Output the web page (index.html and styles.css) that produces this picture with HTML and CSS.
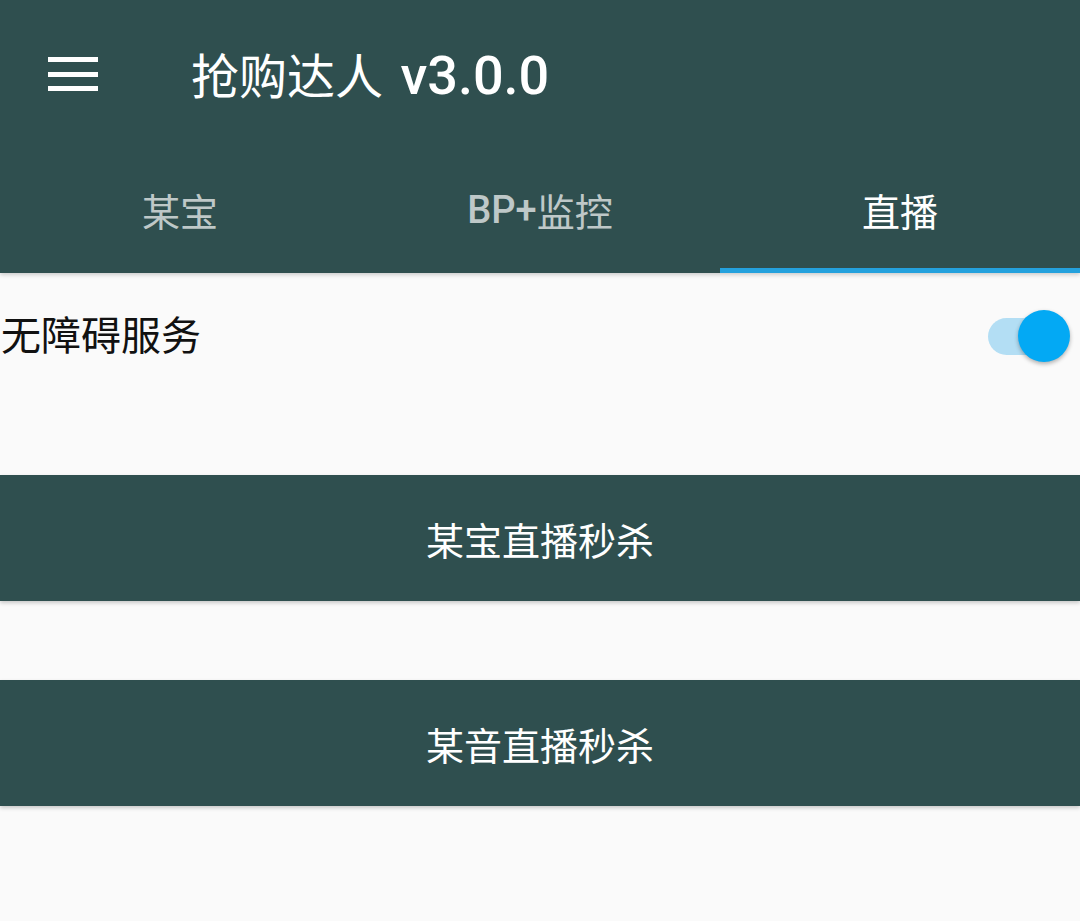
FILE: index.html
```html
<!DOCTYPE html>
<html lang="zh-CN">
<head>
<meta charset="utf-8">
<title>抢购达人 v3.0.0</title>
<link rel="stylesheet" href="styles.css">
</head>
<body>
<div class="app">
  <header class="appbar">
    <div class="toolbar">
      <button class="menu" aria-label="menu">
        <span class="bar"></span><span class="bar"></span><span class="bar"></span>
      </button>
      <h1 class="title">抢购达人<span class="latin"> v3.0.0</span></h1>
    </div>
    <nav class="tabs">
      <div class="tab">某宝</div>
      <div class="tab"><span class="latin">BP+</span>监控</div>
      <div class="tab active">直播</div>
    </nav>
  </header>
  <main class="content">
    <div class="row">
      <span class="row-label">无障碍服务</span>
      <div class="switch">
        <span class="track"></span>
        <span class="thumb"></span>
      </div>
    </div>
    <button class="action first">某宝直播秒杀</button>
    <button class="action second">某音直播秒杀</button>
  </main>
</div>
</body>
</html>
```

FILE: styles.css
```css
* { box-sizing: border-box; }
html, body {
  margin: 0;
  padding: 0;
  background: #fafafa;
  font-family: Roboto, "Noto Sans CJK SC", sans-serif;
}
.app {
  width: 1080px;
  min-height: 921px;
  background: #fafafa;
  overflow: hidden;
}
.appbar {
  background: #2f4f4f;
  position: relative;
  z-index: 2;
  box-shadow: 0 2px 4px rgba(0,0,0,0.18);
}
.toolbar {
  height: 147px;
  display: flex;
  align-items: center;
  padding-left: 48px;
}
.menu {
  width: 50px;
  height: 34px;
  padding: 0;
  border: 0;
  background: transparent;
  display: flex;
  flex-direction: column;
  justify-content: space-between;
  margin-top: 1px;
}
.bar {
  display: block;
  width: 50px;
  height: 5px;
  background: #ffffff;
}
.title {
  margin: 0 0 0 93px;
  color: #ffffff;
  font-size: 48px;
  font-weight: 400;
  line-height: 1;
  padding-top: 4px;
}
.title .latin {
  font-size: 54px;
  font-weight: 500;
  margin-left: 4px;
}
.tabs {
  display: flex;
  height: 126px;
}
.tab {
  flex: 1;
  display: flex;
  align-items: center;
  justify-content: center;
  font-size: 38px;
  font-weight: 400;
  color: rgba(255,255,255,0.7);
  padding-top: 4px;
  border-bottom: 5px solid transparent;
}
.tab .latin {
  font-weight: 500;
}
.tab.active {
  color: #ffffff;
  border-bottom-color: #24a1dd;
}
.content {
  display: flex;
  flex-direction: column;
}
.row {
  height: 126px;
  display: flex;
  align-items: center;
  justify-content: space-between;
  padding-left: 1px;
  padding-right: 10px;
}
.row-label {
  font-size: 40px;
  color: #111111;
  margin-top: -6px;
}
.switch {
  position: relative;
  width: 82px;
  height: 52px;
  display: flex;
  align-items: center;
}
.track {
  display: block;
  width: 72px;
  height: 37px;
  border-radius: 19px;
  background: #b3def4;
}
.thumb {
  position: absolute;
  right: 0;
  top: 0;
  width: 52px;
  height: 52px;
  border-radius: 50%;
  background: #03a9f4;
  box-shadow: 0 2px 4px rgba(0,0,0,0.3);
}
.action {
  display: block;
  width: 100%;
  height: 126px;
  border: 0;
  background: #2f4f4f;
  color: #ffffff;
  font-family: Roboto, "Noto Sans CJK SC", sans-serif;
  font-size: 38px;
  box-shadow: 0 2px 4px rgba(0,0,0,0.2);
  padding: 0;
}
.action.first { margin-top: 76px; }
.action.second { margin-top: 79px; }
```
